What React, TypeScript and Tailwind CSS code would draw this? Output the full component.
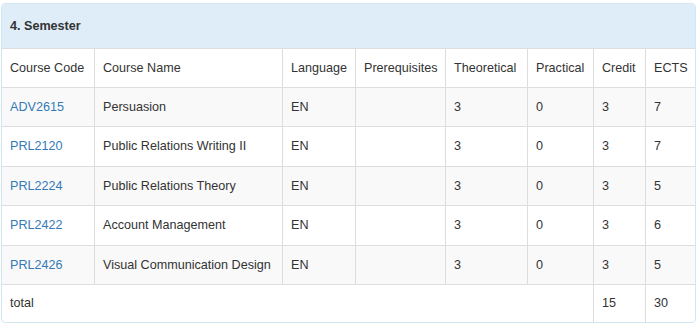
import React from "react";

const rows = [
  { code: "ADV2615", name: "Persuasion", ects: "7", h: "h-[39px]" },
  { code: "PRL2120", name: "Public Relations Writing II", ects: "7", h: "h-[40px]" },
  { code: "PRL2224", name: "Public Relations Theory", ects: "5", h: "h-[39px]" },
  { code: "PRL2422", name: "Account Management", ects: "6", h: "h-[40px]" },
  { code: "PRL2426", name: "Visual Communication Design", ects: "5", h: "h-[39px]" },
];

const cell = "border-t border-r border-[#dddddd] px-[8px] align-middle text-left font-normal whitespace-nowrap";
const last = "border-t border-[#dddddd] px-[8px] align-middle text-left font-normal whitespace-nowrap";

export default function App() {
  return (
    <div className="w-[700px] h-[325px] bg-white pt-[3px] pl-[1px] text-[12.6px] text-[#333333] font-['Liberation_Sans',Arial,sans-serif]">
      <div className="w-[695px] rounded-[4px] border border-[#d3e7f3] overflow-hidden bg-white">
        {/* Heading */}
        <div className="h-[44px] bg-[#dfedf8] flex items-center px-[8px] font-bold">4. Semester</div>

        <table className="w-full table-fixed border-separate border-spacing-0">
          <colgroup>
            <col className="w-[93px]" />
            <col className="w-[188px]" />
            <col className="w-[73px]" />
            <col className="w-[90px]" />
            <col className="w-[82px]" />
            <col className="w-[66px]" />
            <col className="w-[52px]" />
            <col />
          </colgroup>
          <thead>
            <tr className="h-[39px]">
              <th className={cell}>Course Code</th>
              <th className={cell}>Course Name</th>
              <th className={cell}>Language</th>
              <th className={cell}>Prerequisites</th>
              <th className={cell}>Theoretical</th>
              <th className={cell}>Practical</th>
              <th className={cell}>Credit</th>
              <th className={last}>ECTS</th>
            </tr>
          </thead>
          <tbody>
            {rows.map((r, i) => (
              <tr key={r.code} className={`${r.h} ${i % 2 === 0 ? "bg-[#f9f9f9]" : "bg-white"}`}>
                <td className={cell}>
                  <a href="#" className="text-[#337ab7]">{r.code}</a>
                </td>
                <td className={cell}>{r.name}</td>
                <td className={cell}>EN</td>
                <td className={cell}></td>
                <td className={cell}>3</td>
                <td className={cell}>0</td>
                <td className={cell}>3</td>
                <td className={last}>{r.ects}</td>
              </tr>
            ))}
            <tr className="h-[38px]">
              <td colSpan={6} className={cell}>total</td>
              <td className={cell}>15</td>
              <td className={last}>30</td>
            </tr>
          </tbody>
        </table>
      </div>
    </div>
  );
}
